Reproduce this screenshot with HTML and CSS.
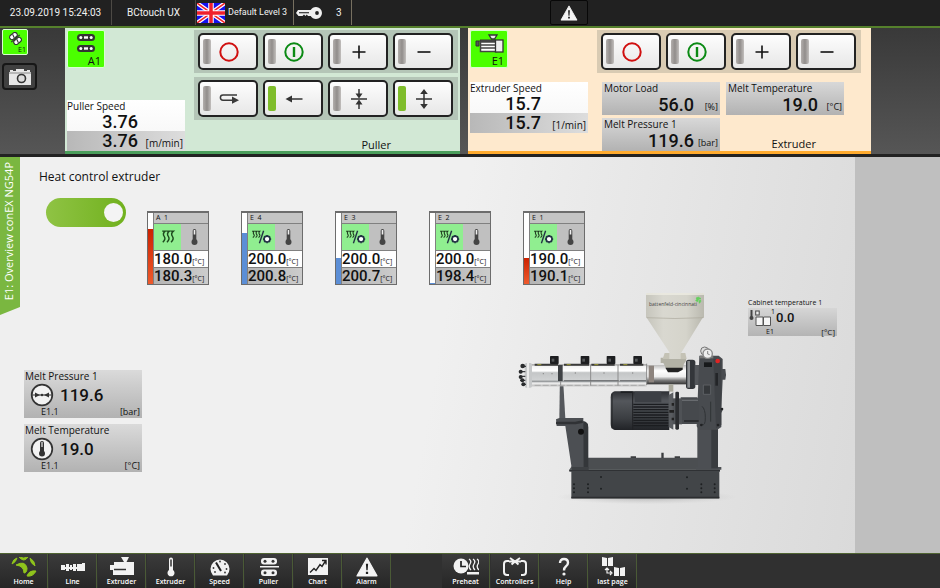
FILE: index.html
```html
<!DOCTYPE html>
<html lang="en">
<head>
<meta charset="utf-8">
<title>BCtouch UX</title>
<link rel="stylesheet" href="styles.css">
</head>
<body>
<svg class="defs" aria-hidden="true">
  <defs>
    <symbol id="i-off" viewBox="0 0 20 20"><circle cx="10" cy="10" r="8.7" fill="none" stroke="#d01010" stroke-width="2"/></symbol>
    <symbol id="i-on" viewBox="0 0 20 20"><circle cx="10" cy="10" r="8.7" fill="none" stroke="#0b8a14" stroke-width="2"/><path d="M10 5v10" stroke="#0b8a14" stroke-width="2.4"/></symbol>
    <symbol id="i-plus" viewBox="0 0 20 20"><path d="M3.5 10h13M10 3.5v13" stroke="#111" stroke-width="1.6"/></symbol>
    <symbol id="i-minus" viewBox="0 0 20 20"><path d="M3.500 10h13" stroke="#111" stroke-width="1.6"/></symbol>
    <symbol id="i-loop" viewBox="0 0 20 20"><path d="M18 6H4a2.600 2.600 0 0 0 0 5.200h10" fill="none" stroke="#3a3a3a" stroke-width="1.5"/><path d="M13 7.500l7 3.700-7 3.500z" fill="#3a3a3a"/></symbol>
    <symbol id="i-left" viewBox="0 0 20 20"><path d="M5 10h13.500" stroke="#333" stroke-width="1.500"/><path d="M1.500 10l6.500-3.500v7z" fill="#333"/></symbol>
    <symbol id="i-close" viewBox="0 0 20 20"><path d="M2 10h16M10 0v6M10 14v6" stroke="#333" stroke-width="1.500"/><path d="M6.500 4.500h7L10 9.500zM6.500 15.500h7L10 10.500z" fill="#333"/></symbol>
    <symbol id="i-open" viewBox="0 0 20 20"><path d="M2 10h16M10 3v14" stroke="#333" stroke-width="1.500"/><path d="M6.200 5h7.600L10 0zM6.200 15h7.600L10 20z" fill="#333"/></symbol>
    <symbol id="i-heat" viewBox="-2 -2 17 17"><path d="M2 1.500h2.500q-2.500 2.200-.8 4.500t-1.200 5M5.500 1.500H8q-2.500 2.200-.8 4.500T6 11M9 1.500h2.500q-2.500 2.200-.8 4.500t-1.200 5" fill="none" stroke="#1d4a1d" stroke-width="1.200"/></symbol>
    <symbol id="i-heatcool" viewBox="0 0 20 14"><path d="M1 1.500h2q-1.500 1.500-.3 3t-1 3M3.700 1.500h2q-1.500 1.500-.3 3t-1 3M6.400 1.500h2q-1.500 1.500-.3 3t-1 3" fill="none" stroke="#1d3a1d" stroke-width="1"/><path d="M12 1L8 13" stroke="#234" stroke-width="1.300"/><circle cx="15.300" cy="9" r="2.800" fill="#fff" stroke="#234" stroke-width="1.500"/><path d="M15.300 5v1M15.300 12v1M11.500 9h1M18.200 9h1M12.600 6.300l.7.700M17.300 11l.7.700M18 6.300l-.7.700M13.300 11l-.7.700" stroke="#234" stroke-width="1.500"/></symbol>
    <symbol id="i-thermo" viewBox="0 0 8 18"><rect x="2.200" y="1" width="3.600" height="12" rx="1.800" fill="#444"/><rect x="3.200" y="2" width="1.600" height="4.500" fill="#eee"/><circle cx="4" cy="14" r="3" fill="#444"/></symbol>
    <symbol id="i-puller" viewBox="0 0 18 18"><g fill="#333"><rect x="0" y="0" width="18" height="7" rx="3.500"/><rect x="0" y="11" width="18" height="7" rx="3.500"/></g><g fill="#fff"><circle cx="3.800" cy="3.500" r="1.500"/><circle cx="14.200" cy="3.500" r="1.500"/><rect x="7" y="2.300" width="4" height="2.400"/><circle cx="3.800" cy="14.500" r="1.500"/><circle cx="14.200" cy="14.500" r="1.500"/><rect x="7" y="13.300" width="4" height="2.400"/></g></symbol>
    <symbol id="i-warn" viewBox="0 0 20 18"><path d="M10 1L19 17H1z" fill="#f4f4f4" stroke="#f4f4f4" stroke-linejoin="round"/><path d="M9 6h2l-.4 6h-1.200zM9 13.200h2v2H9z" fill="#222"/></symbol>
  </defs>
</svg>

<header class="topbar">
  <time class="cell cell-time">23.09.2019 15:24:03</time>
  <span class="cell cell-app">BCtouch UX</span>
  <span class="cell cell-user">
    <svg class="flag" viewBox="0 0 28 20" aria-label="English"><path fill="#1410f0" d="M0 0h28v20H0z"/><path d="M0 0l28 20M28 0L0 20" stroke="#fff" stroke-width="4"/><path d="M0 0l28 20M28 0L0 20" stroke="#f0202c" stroke-width="1.500"/><path d="M14 0v20M0 10h28" stroke="#fff" stroke-width="5.500"/><path d="M14 0v20M0 10h28" stroke="#f0202c" stroke-width="3.500"/></svg>
    <span>Default Level 3</span>
  </span>
  <span class="cell cell-key">
    <svg class="key" viewBox="0 0 26 12"><path d="M20 0a6 6 0 0 1 0 12q-3.500 0-5.300-3H12l-1.200-1.500L9.500 9 8 7.500 6.500 9H2.500L0 6l2-3h12.700Q16.500 0 20 0z" fill="#f0f0f0"/><circle cx="21" cy="6" r="1.900" fill="#222"/><path d="M3 5.700h10" stroke="#333" stroke-width="1.200"/></svg>
    <span>3</span>
  </span>
  <button class="alarm" aria-label="Alarms"><svg viewBox="0 0 20 18"><use href="#i-warn"/></svg></button>
</header>

<section class="deck">
  <div class="tools">
    <button class="badge badge-small" aria-label="Extruder E1">
      <svg viewBox="0 0 14 14"><g transform="rotate(-40 7 7)" fill="#fff" stroke="#333" stroke-width="1.200"><rect x="2.500" y="1" width="9" height="5" rx="2.300"/><rect x="2.500" y="8" width="9" height="5" rx="2.300"/><path d="M1 7h12M7.500 1.500l-1 4M7.500 8.500l-1 4"/></g></svg>
      <span>E1</span>
    </button>
    <button class="camera" aria-label="Screenshot"><svg viewBox="0 0 22 16"><path d="M0 3h1V1h3v1h3V0h8v2h3V1h3v2h1v13H0z" fill="#e6e6e6"/><path d="M0 4h22" stroke="#888" stroke-width="1"/><circle cx="12.500" cy="9.500" r="4" fill="#ddd" stroke="#333" stroke-width="1.600"/></svg></button>
  </div>

  <section class="panel puller">
    <div class="side">
      <button class="badge" aria-label="Puller A1"><svg class="b-puller" viewBox="0 0 18 18"><use href="#i-puller"/></svg><span>A1</span></button>
      <div class="dual"><h3>Puller Speed</h3><p class="set">3.76</p><p class="act">3.76<span>[m/min]</span></p></div>
    </div>
    <div class="controls">
      <div class="keys">
        <button aria-label="Stop"><i></i><svg><use href="#i-off"/></svg></button>
        <button aria-label="Start"><i></i><svg><use href="#i-on"/></svg></button>
        <button aria-label="Faster"><i></i><svg><use href="#i-plus"/></svg></button>
        <button aria-label="Slower"><i></i><svg><use href="#i-minus"/></svg></button>
      </div>
      <div class="keys">
        <button aria-label="Reverse"><i></i><svg><use href="#i-loop"/></svg></button>
        <button aria-label="Forward"><i class="lit"></i><svg><use href="#i-left"/></svg></button>
        <button aria-label="Close"><i></i><svg><use href="#i-close"/></svg></button>
        <button aria-label="Open"><i class="lit"></i><svg><use href="#i-open"/></svg></button>
      </div>
      <h2>Puller</h2>
    </div>
  </section>

  <section class="panel extruder">
    <div class="side">
      <button class="badge" aria-label="Extruder E1"><svg class="b-ext" viewBox="0 0 29 20"><path d="M14 1h8l-2.500 4h-3z" fill="#eee" stroke="#333" stroke-width="1.300"/><path d="M1 7h3v5H1zM5 6h16v2H5z" fill="#555" stroke="#333"/><rect x="5.500" y="8" width="16" height="9.500" fill="#fff" stroke="#444" stroke-width="1.500"/><path d="M6 11h15M6 14h15" stroke="#444" stroke-width="1.500"/><rect x="20.500" y="6" width="7.500" height="12" fill="#eee" stroke="#333" stroke-width="1.300"/></svg><span>E1</span></button>
      <div class="dual"><h3>Extruder Speed</h3><p class="set">15.7</p><p class="act">15.7<span>[1/min]</span></p></div>
    </div>
    <div class="controls">
      <div class="keys">
        <button aria-label="Stop"><i></i><svg><use href="#i-off"/></svg></button>
        <button aria-label="Start"><i></i><svg><use href="#i-on"/></svg></button>
        <button aria-label="Faster"><i></i><svg><use href="#i-plus"/></svg></button>
        <button aria-label="Slower"><i></i><svg><use href="#i-minus"/></svg></button>
      </div>
      <div class="readings">
        <div class="reading"><h3>Motor Load</h3><p>56.0<span>[%]</span></p></div>
        <div class="reading"><h3>Melt Temperature</h3><p>19.0<span>[°C]</span></p></div>
        <div class="reading"><h3>Melt Pressure 1</h3><p>119.6<span>[bar]</span></p></div>
        <h2>Extruder</h2>
      </div>
    </div>
  </section>
</section>

<main>
  <div class="tab"><span>E1: Overview conEX NG54P</span></div>
  <div class="screen">
    <h1><label for="heat">Heat control extruder</label></h1>
    <div class="heating">
      <input class="switch" id="heat" type="checkbox" role="switch" checked>
      <div class="zones">
        <article class="zone"><div class="bar"><b class="hot" style="height:77%"></b></div><div class="info"><h4>A&nbsp; 1</h4><div class="modes"><svg class="heat"><use href="#i-heat"/></svg><svg><use href="#i-thermo"/></svg></div><p>180.0<span>[°C]</span></p><p class="act">180.3<span>[°C]</span></p></div></article>
        <article class="zone"><div class="bar"><b class="cold" style="height:72%"></b></div><div class="info"><h4>E&nbsp; 4</h4><div class="modes"><svg class="heat"><use href="#i-heatcool"/></svg><svg><use href="#i-thermo"/></svg></div><p>200.0<span>[°C]</span></p><p class="act">200.8<span>[°C]</span></p></div></article>
        <article class="zone"><div class="bar"><b class="cold" style="height:36%"></b></div><div class="info"><h4>E&nbsp; 3</h4><div class="modes"><svg class="heat"><use href="#i-heatcool"/></svg><svg><use href="#i-thermo"/></svg></div><p>200.0<span>[°C]</span></p><p class="act">200.7<span>[°C]</span></p></div></article>
        <article class="zone"><div class="bar"><b class="cold" style="height:2%"></b></div><div class="info"><h4>E&nbsp; 2</h4><div class="modes"><svg class="heat"><use href="#i-heatcool"/></svg><svg><use href="#i-thermo"/></svg></div><p>200.0<span>[°C]</span></p><p class="act">198.4<span>[°C]</span></p></div></article>
        <article class="zone"><div class="bar"><b class="hot" style="height:36%"></b></div><div class="info"><h4>E&nbsp; 1</h4><div class="modes"><svg class="heat"><use href="#i-heatcool"/></svg><svg><use href="#i-thermo"/></svg></div><p>190.0<span>[°C]</span></p><p class="act">190.1<span>[°C]</span></p></div></article>
      </div>
    </div>

    <div class="plant">
      <div class="sensors">
        <div class="sensor"><h3>Melt Pressure 1</h3><div class="line"><svg viewBox="0 0 24 24"><circle cx="12" cy="12" r="10.300" fill="#f2f2f2" stroke="#333" stroke-width="1.700"/><path d="M2 12h20" stroke="#333" stroke-width="1"/><path d="M5 9.500l5 2.500-5 2.500zM19 9.500L14 12l5 2.500z" fill="#333"/><circle cx="12" cy="12" r="1.300" fill="#333"/></svg><strong>119.6</strong></div><div class="foot"><span>E1.1</span><span>[bar]</span></div></div>
        <div class="sensor"><h3>Melt Temperature</h3><div class="line"><svg viewBox="0 0 24 24"><circle cx="12" cy="12" r="10.300" fill="#f2f2f2" stroke="#333" stroke-width="1.700"/><rect x="10" y="4" width="4" height="12" rx="2" fill="#333"/><rect x="11.200" y="5" width="1.600" height="5" fill="#bbb"/><circle cx="12" cy="16.500" r="3" fill="#333"/></svg><strong>19.0</strong></div><div class="foot"><span>E1.1</span><span>[°C]</span></div></div>
      </div>

      <svg class="machine" viewBox="0 0 720 660" role="img" aria-label="Extruder machine">
        <defs>
          <linearGradient id="steel" x1="0" y1="0" x2="0" y2="1"><stop offset="0" stop-color="#8e8e8e"/><stop offset=".1" stop-color="#f4f4f4"/><stop offset=".3" stop-color="#fff"/><stop offset=".38" stop-color="#c4c6c7"/><stop offset=".7" stop-color="#cfd1d2"/><stop offset=".78" stop-color="#9a9d9f"/><stop offset=".85" stop-color="#f2f2f2"/><stop offset="1" stop-color="#bbb"/></linearGradient>
          <linearGradient id="chrome" x1="0" y1="0" x2="0" y2="1"><stop offset="0" stop-color="#bbb"/><stop offset=".3" stop-color="#fff"/><stop offset=".6" stop-color="#eee"/><stop offset=".8" stop-color="#777"/><stop offset="1" stop-color="#333"/></linearGradient>
          <linearGradient id="cream" x1="0" y1="0" x2="1" y2="0"><stop offset="0" stop-color="#c6c5bc"/><stop offset=".3" stop-color="#d9d8d0"/><stop offset=".7" stop-color="#d5d4cb"/><stop offset="1" stop-color="#bab9af"/></linearGradient>
          <linearGradient id="motor" x1="0" y1="0" x2="0" y2="1"><stop offset="0" stop-color="#2d2f33"/><stop offset=".25" stop-color="#54575c"/><stop offset=".7" stop-color="#3b3e42"/><stop offset="1" stop-color="#212327"/></linearGradient>
          <radialGradient id="shade"><stop offset="0" stop-color="#999" stop-opacity=".7"/><stop offset="1" stop-color="#bbb" stop-opacity="0"/></radialGradient>
        </defs>
        <ellipse cx="440" cy="636" rx="270" ry="22" fill="url(#shade)"/>
        <!-- base frame -->
        <path d="M232 518h390l38 36H208z" fill="#4b4e51"/>
        <path d="M208 554h452v6h-2v80H214v-80h-6z" fill="#424548"/>
        <path d="M208 556h452" stroke="#2f3134" stroke-width="4"/>
        <path d="M214 638h444" stroke="#2c2e30" stroke-width="5"/>
        <g fill="#1e2022"><circle cx="222" cy="598" r="3"/><circle cx="222" cy="610" r="3"/><circle cx="222" cy="622" r="3"/><circle cx="264" cy="598" r="3"/><circle cx="264" cy="610" r="3"/><circle cx="264" cy="622" r="3"/><circle cx="303" cy="576" r="3"/><circle cx="303" cy="611" r="3"/><circle cx="561" cy="577" r="3"/><circle cx="561" cy="611" r="3"/><circle cx="604" cy="598" r="3"/><circle cx="604" cy="610" r="3"/><circle cx="604" cy="622" r="3"/><circle cx="644" cy="598" r="3"/><circle cx="644" cy="610" r="3"/><circle cx="644" cy="622" r="3"/></g>
        <path d="M392 514h16v5h-16zM484 503h7v16h-7zM524 514h16v5h-16z" fill="#3b3d3f"/>
        <!-- front support -->
        <path d="M180 262l-2 138h18l-8-138z" fill="#55585c"/>
        <path d="M172 262h16v30h-16z" fill="#4a4d50"/>
        <path d="M168 403l10-4h72v10l14 8v130l-12 8h-36l-20-132h-26z" fill="#4c4f53"/>
        <path d="M168 414h58l22-4" stroke="#303235" stroke-width="8" fill="none"/>
        <path d="M250 408q15 2 15 20v120h-14z" fill="#34373a"/>
        <circle cx="243" cy="440" r="9" fill="#111"/>
        <path d="M216 546h50v10h-50z" fill="#3d4043"/>
        <!-- barrel -->
        <rect x="90" y="238" width="350" height="66" fill="url(#steel)"/>
        <path d="M104 239h70M192 239h75M274 239h70M360 239h70" stroke="#3a3a3a" stroke-width="6"/>
        <path d="M112 239h12M200 239h12M283 239h12M370 239h12" stroke="#9c9a33" stroke-width="3"/>
        <path d="M182 240v62M272 240v62M354 240v62" stroke="#8c8c8c" stroke-width="3"/>
        <path d="M174 240h14v48h-14z" fill="#3f4245"/>
        <path d="M192 287h164M360 287h80" stroke="#6a6c6f" stroke-width="3"/>
        <path d="M104 301h330" stroke="#9a9a9a" stroke-width="2" stroke-dasharray="18 6"/>
        <g fill="#888"><circle cx="130" cy="266" r="2"/><circle cx="156" cy="266" r="2"/><circle cx="226" cy="264" r="2"/><circle cx="312" cy="264" r="2"/><circle cx="398" cy="264" r="2"/></g>
        <g fill="#1d1e20"><rect x="150" y="213" width="26" height="24" rx="2"/><rect x="242" y="213" width="26" height="24" rx="2"/><rect x="320" y="213" width="26" height="24" rx="2"/><rect x="400" y="213" width="26" height="24" rx="2"/></g>
        <g fill="#55585a"><rect x="155" y="221" width="8" height="9"/><rect x="247" y="221" width="8" height="9"/><rect x="325" y="221" width="8" height="9"/><rect x="405" y="221" width="8" height="9"/></g>
        <rect x="74" y="234" width="22" height="74" rx="5" fill="#c6c8c9"/><path d="M84 234v74" stroke="#f2f2f2" stroke-width="5"/>
        <path d="M66 244h12M60 260h16M60 274h16M60 286h16M66 298h12" stroke="#3c3e40" stroke-width="4"/>
        <g fill="#292b2d"><circle cx="68" cy="243" r="7"/><circle cx="62" cy="260" r="6"/><circle cx="62" cy="276" r="6"/><circle cx="67" cy="286" r="6"/><circle cx="70" cy="298" r="6"/></g>
        <rect x="440" y="240" width="122" height="58" fill="url(#chrome)"/>
        <path d="M446 242h16v50h-16z" fill="#8d847e"/>
        <path d="M440 236v64" stroke="#888" stroke-width="3"/>
        <!-- hopper -->
        <path d="M482 218h76v10l-6 8-4 14h-50l-8-16h-8z" fill="#b2b1a5"/>
        <path d="M496 248h52v6l-14 8h-30z" fill="#222"/>
        <path d="M494 204h62l4 18h-72z" fill="#c4c2b5"/>
        <path d="M440 98h168l-66 108v16h-34v-20z" fill="url(#cream)"/>
        <rect x="438" y="24" width="174" height="75" rx="3" fill="url(#cream)"/>
        <path d="M438 27h174" stroke="#efeee4" stroke-width="4"/>
        <path d="M440 98q84 5 170 0" stroke="#aaa89b" stroke-width="2" fill="none"/>
        <text class="brand" x="447" y="63">battenfeld-cincinnati</text>
        <path d="M587 47q10-14 16-6-8-1-10 9zM592 44l-4-5 8-3zM598 55q-4-9 4-10 2 6-4 10z" fill="#62d05c" stroke="#62d05c" stroke-width="2"/>
        <!-- gearbox -->
        <path d="M558 232q0-8 8-8h12q8 0 8 8v72q0 8-8 8h-12q-8 0-8-8z" fill="#33363a"/>
        <path d="M562 228h8v80h-8z" fill="#8b8e91"/>
        <path d="M584 240h22v60h-22z" fill="#54575b"/>
        <path d="M592 420h62v126h10v8h-76v-8h4z" fill="#4c4f53"/><path d="M634 430h20v120h-20z" fill="#393c3f"/>
        <path d="M598 212h58l12 10v30h8q4 18 0 32h-8l-4 86 4 6-4 8v42l-12 8h-54l-8-10z" fill="#484b4f"/>
        <path d="M640 222l24 2v196l-16 10z" fill="#3e4145"/>
        <path d="M610 300h22v28h-22z" fill="#35383b" stroke="#5c5f63" stroke-width="3"/>
        <path d="M612 232h24v14h-24z" fill="#17191b"/><path d="M646 264h8v38h-8z" fill="#232528"/><path d="M606 364q10 8 10 34t-10 20M632 350v60" fill="none" stroke="#303336" stroke-width="3"/>
        <g fill="#202224"><circle cx="604" cy="420" r="4"/><circle cx="654" cy="420" r="4"/><circle cx="666" cy="372" r="4"/></g>
        <circle cx="653" cy="228" r="7" fill="#e02424"/><path d="M600 212h40v8h-40z" fill="#777"/>
        <circle cx="614" cy="198" r="12" fill="#ddd" stroke="#777" stroke-width="3"/><circle cx="623" cy="206" r="14" fill="#eee" stroke="#888" stroke-width="4"/><path d="M623 198v9l6 2" stroke="#555" fill="none" stroke-width="2"/>
        <!-- motor -->
        <path d="M506 298h14v22h-14z" fill="#aaa99c"/>
        <path d="M344 319h164v116H344q-12-3-12-18V337q0-15 12-18z" fill="url(#motor)"/>
        <path d="M336 326v104M398 319v116" stroke="#202225" stroke-width="3"/>
        <path d="M400 358h106M400 366h106M400 374h106M400 382h106M400 390h106M400 398h106M400 406h106M400 414h106M400 422h106" stroke="#1b1d20" stroke-width="4"/>
        <path d="M404 320h80v32h-80z" fill="#3c3f44"/><path d="M362 319h34v5h-34z" fill="#1e2023"/>
        <path d="M506 330l14-8v112l-14-8z" fill="#595c60"/>
        <path d="M542 337h50l4 8v72H542z" fill="#46494d"/><path d="M546 346h48" stroke="#686b6f" stroke-width="4"/><path d="M552 408h44" stroke="#26282b" stroke-width="5"/>
        <rect x="518" y="340" width="28" height="78" fill="#4f5256"/>
        <rect x="526" y="320" width="11" height="114" rx="4" fill="#2b2d30"/>
        <path d="M508 375h14v8h-14zM515 354h7v8h-7zM515 398h7v8h-7z" fill="#222"/>
      </svg>

      <div class="cabinet"><h3>Cabinet temperature 1</h3><div class="box"><svg viewBox="0 0 22 18"><rect x="1.500" y="1" width="2" height="8" fill="#444"/><circle cx="2.500" cy="9" r="2" fill="#444"/><rect x="6.700" y="2" width="3.500" height="4" fill="#eee" stroke="#444"/><path d="M7 8h7v8.500H7zM14.500 8h7v8.500h-7z" fill="#f6f6f6" stroke="#555"/></svg><sup>1</sup><strong>0.0</strong><span class="idx">E1</span><span class="unit">[°C]</span></div></div>
    </div>
  </div>
  <aside></aside>
</main>

<nav>
  <button><svg viewBox="0 0 26 20"><path d="M1 7Q2 2 6 1 5 5 1 7zM8 0q5 2 9 0-4 6-9 0zM19 1q5 3 5 8-5-3-5-8zM5 8q9-5 11 3 0 5-3 5 0-7-8-8zM16 19q2-6 9-5-3 6-9 5z" fill="#8fc31c" stroke="#8fc31c"/></svg>Home</button>
  <button><svg viewBox="0 0 26 20"><g fill="#f2f2f2"><path d="M1 8h4v5H1zM6 7h3v7H6zM10 8h2v5h-2zM13 7h3v7h-3zM17 7h5V6h3v8h-8z"/><path d="M1 10h24v2H1z"/></g></svg>Line</button>
  <button><svg viewBox="0 0 26 20"><path d="M12 0h8l-2.500 5H25v13H4v-5H1V8h4V5h10z" fill="#f2f2f2"/><path d="M5 12.500h12" stroke="#333" stroke-width="1.500"/></svg>Extruder</button>
  <button><svg viewBox="0 0 26 20"><path d="M11 2.500a2 2 0 0 1 4 0V13a3.500 3.500 0 1 1-4 0z" fill="#f2f2f2"/><path d="M13 2.500v7" stroke="#333" stroke-width="1.500"/></svg>Extruder</button>
  <button><svg viewBox="0 0 26 20"><path d="M6 18.500a9.500 9.500 0 1 1 14 0z" fill="#f2f2f2"/><path d="M9 5.500l5 8.500" stroke="#222" stroke-width="2"/><g fill="#333"><circle cx="6.500" cy="11" r=".9"/><circle cx="13" cy="4.500" r=".9"/><circle cx="18" cy="7" r=".9"/><circle cx="19.500" cy="12" r=".9"/><circle cx="8" cy="15" r=".9"/><circle cx="18" cy="15.500" r=".9"/></g></svg>Speed</button>
  <button><svg viewBox="0 0 26 20"><g fill="#f2f2f2"><rect x="5" y="1" width="16" height="6.500" rx="3"/><rect x="5" y="12.500" width="16" height="6.500" rx="3"/><path d="M4 9h19v1.500H4z"/></g><g fill="#333"><circle cx="9" cy="4.200" r="1.500"/><circle cx="17" cy="4.200" r="1.500"/><circle cx="9" cy="15.700" r="1.500"/><circle cx="17" cy="15.700" r="1.500"/></g></svg>Puller</button>
  <button><svg viewBox="0 0 26 20"><path d="M3 1h20v17H3z" fill="#f2f2f2"/><path d="M5 15.500l4-4 2 2 4-6 2 2L20.500 4M17 3.500h4V7.500" fill="none" stroke="#222" stroke-width="1.400"/></svg>Chart</button>
  <button><svg viewBox="0 0 20 18"><use href="#i-warn"/></svg>Alarm</button>
  <button class="second"><svg viewBox="0 0 26 20"><circle cx="8" cy="9" r="7.500" fill="#f2f2f2"/><path d="M8 4v5.500h5" fill="none" stroke="#222" stroke-width="1.700"/><path d="M14 15h12v2.500H14z" fill="#f2f2f2"/><path d="M16 2q3 2 1 5t1 6M20 2q3 2 1 5t1 6M24 2q3 2 1 5t1 6" fill="none" stroke="#f2f2f2" stroke-width="1.300"/></svg>Preheat</button>
  <button><svg viewBox="0 0 26 20"><path d="M7 4H5Q2 4 2 7v8q0 3 3 3h2M19 4h2q3 0 3 3v8q0 3-3 3h-2M8 1l5 3.500L18 1M9.500 7.500L13 4.500l3.500 3M7 4.500h12" fill="none" stroke="#f2f2f2" stroke-width="2"/></svg>Controllers</button>
  <button><svg viewBox="0 0 26 20"><path d="M9 6q0-4 4-4t4 3.800q0 2.200-2.200 3.700Q13 11 13 13.500" fill="none" stroke="#f2f2f2" stroke-width="2.400"/><circle cx="13" cy="17" r="1.600" fill="#f2f2f2"/></svg>Help</button>
  <button><svg viewBox="0 0 26 20"><path d="M2 0l5 1v8H2zM8 1l5-1v9H8zM14 10l5 1v8h-5zM20 11l5-1v9h-5z" fill="#f2f2f2"/><path d="M7 11.500V16h4M5 13l2-2 2 2M10 14l2 2-2 2" fill="none" stroke="#f2f2f2" stroke-width="1.200"/></svg>last page</button>
</nav>
</body>
</html>
```
FILE: styles.css
```css
* { box-sizing: border-box; }

body {
  margin: 0;
  min-height: 100vh;
  display: flex;
  flex-direction: column;
  background: #efefef;
  color: #111;
  font-family: "Open Sans", "Noto Sans", sans-serif;
  font-size: 10px;
  line-height: 13px;
}

h1, h2, h3, h4, p { margin: 0; font-weight: 400; font-size: inherit; }
button { margin: 0; padding: 0; border: 0; font: inherit; color: inherit; }
svg { display: block; }
.defs { position: absolute; width: 0; height: 0; }

/* Top bar */
.topbar {
  display: flex;
  height: 28px;
  padding-bottom: 1px;
  background: #212121;
  border-bottom: 2px solid #55802c;
  color: #f2f2f2;
  font-family: Roboto, sans-serif;
  font-size: 10px;
}
.cell {
  display: flex;
  align-items: center;
  justify-content: center;
  border-right: 1px solid #4d4a45;
}
.cell-time { width: 112px; }
.cell-app { width: 84px; }
.cell-user { width: 98px; justify-content: flex-start; gap: 3px; padding-left: 1px; font-size: 9px; border-color: #777060; }
.cell-key { width: 58px; justify-content: flex-start; padding-left: 2px; gap: 14px; border-color: #777060; }
.flag { width: 28px; height: 20px; }
.key { width: 26px; height: 12px; }
.alarm {
  margin-left: 198px;
  width: 38px;
  height: 25px;
  display: grid;
  place-items: center;
  background: #222;
  border: 1px solid #080808;
  border-radius: 2px;
}
.alarm svg { width: 18px; height: 16px; }

/* Machine deck */
.deck {
  display: flex;
  height: 129px;
  background: linear-gradient(#393939, #565656);
  border-bottom: 3px solid #222;
}
.deck::after { content: ""; width: 69px; }
.tools { width: 65px; padding: 1px 2px; }
.badge {
  display: flex;
  flex-direction: column;
  align-items: center;
  justify-content: space-between;
  width: 38px;
  height: 38px;
  padding: 3px 3px 0;
  background: #4bff00;
  border: 1px solid #d8ffd0;
  border-radius: 2px;
}
.badge span { align-self: flex-end; font-size: 11px; }
.badge-small { width: 26px; height: 26px; padding: 2px 1px 0; }
.badge-small svg { width: 13px; height: 13px; }
.badge-small span { font-size: 7px; line-height: 8px; }
.b-puller { width: 18px; height: 18px; }
.b-ext { width: 29px; height: 20px; }
.camera {
  display: grid;
  place-items: center;
  width: 35px;
  height: 27px;
  margin-top: 8px;
  background: #404040;
  border: 2px solid #171717;
  border-radius: 4px;
}
.camera svg { width: 22px; height: 16px; }

.panel { display: flex; justify-content: space-between; padding: 2px 2px 0; }
.puller { flex: 395; background: #d2e8d5; border-bottom: 3px solid #4a9e5b; }
.extruder { flex: 403; margin-left: 8px; background: #fee9cd; border-bottom: 3px solid #ffab2e; }
.extruder .controls { margin-right: 8px; }
.side { display: flex; flex-direction: column; width: 118px; }
.puller .side { justify-content: space-between; }
.extruder .side { gap: 14px; }

.dual { background: linear-gradient(#fff, #f4f4f4); }
.dual p {
  display: grid;
  grid-template-columns: 71px 1fr;
  font: 500 18px/18px Roboto, sans-serif;
  text-align: right;
}
.dual .act { height: 20px; background: linear-gradient(90deg, #b8b8b8, #ddd); line-height: 20px; }
.dual .act span { padding-right: 2px; font: 10px/24px "Open Sans", sans-serif; }

.controls { display: flex; flex-direction: column; width: 264px; }
.keys {
  display: flex;
  gap: 5px;
  height: 43px;
  margin-bottom: 4px;
  padding: 3px 4px;
  background: #b4c5b7;
}
.extruder .keys { background: #d9cbb3; margin-bottom: 9px; }
.keys button {
  display: flex;
  align-items: center;
  gap: 8px;
  width: 60px;
  height: 37px;
  padding-left: 3px;
  background: linear-gradient(#fdfdfd, #e7e7e7);
  border: 2px solid #222;
  border-radius: 5px;
}
.keys i { width: 8px; height: 25px; border-radius: 2px; background: linear-gradient(90deg, #b2aeac, #918d8b, #c2bfbd); }
.keys i.lit { background: #7fbd2b; }
.keys svg { width: 20px; height: 20px; }
.panel h2 { font-size: 11px; line-height: 14px; text-align: right; }
.puller h2 { margin-top: 14px; padding-right: 67px; }

.readings { display: grid; grid-template-columns: 118px 118px; gap: 3px 6px; padding-left: 5px; }
.reading { height: 33px; background: linear-gradient(#d8d8d8, #b2b2b2); }
.reading h3 { padding-left: 2px; }
.reading p {
  display: grid;
  grid-template-columns: 1fr 26px;
  font: 500 18px/20px Roboto, sans-serif;
  text-align: right;
}
.reading p span { padding-right: 2px; font: 9px/24px "Open Sans", sans-serif; }
.readings h2 { align-self: end; padding-right: 28px; }

/* Overview screen */
main { display: flex; flex: 1; }
.tab {
  align-self: flex-start;
  width: 20px;
  height: 158px;
  padding-top: 5px;
  background: #7ab740;
  clip-path: polygon(0 0, 100% 0, 100% 95%, 0 100%);
  color: #fff;
  font-size: 11px;
}
.tab span { writing-mode: vertical-rl; transform: rotate(180deg); line-height: 18px; white-space: nowrap; }
.screen {
  flex: 1;
  padding: 10px 18px 0 4px;
  background: linear-gradient(100deg, #f0f0f0 50%, #e9e9e9 65%, #dadada 100%);
}
aside { width: 85px; background: #bfbfbf; }
h1 { padding-left: 15px; font-size: 12px; line-height: 20px; }
.heating { display: flex; gap: 21px; padding: 11px 0 0 22px; }
.switch {
  appearance: none;
  display: flex;
  justify-content: flex-end;
  width: 80px;
  height: 29px;
  margin: 0;
  padding: 5px 3px;
  border-radius: 15px;
  background: linear-gradient(90deg, #8fc344, #71b11e);
}
.switch::before { content: ""; width: 19px; height: 19px; border-radius: 50%; background: #f4f4f4; }
.switch:not(:checked) { justify-content: flex-start; }
.zones { display: flex; gap: 32px; padding-top: 13px; }
.zone { display: flex; width: 62px; height: 74px; background: #808080; border: 1px solid #6c6c6c; border-top-width: 2px; }
.bar { display: flex; align-items: flex-end; width: 5px; background: #fff; margin-right: 1px; }
.bar b { width: 100%; }
.hot { background: linear-gradient(#cc2200, #ee5a2c); }
.cold { background: #5b8ed6; }
.info { display: flex; flex-direction: column; gap: 1px; flex: 1; }
.info h4 { height: 10px; padding-left: 2px; background: #c4c4c4; font-size: 7px; line-height: 10px; }
.modes { display: grid; grid-template-columns: 1fr 1fr; height: 26px; background: #c0c0c0; }
.modes svg { width: 100%; height: 26px; padding: 4px; }
.modes .heat { padding: 3px; background: #90ee90; }
.info p {
  display: flex;
  align-items: flex-end;
  height: 16px;
  background: #fff;
  font: 500 15px/16px Roboto, sans-serif;
}
.info p span { font: 7px/10px "Open Sans", sans-serif; }
.info .act { background: linear-gradient(90deg, #b4b4b4, #ccc); }

.plant { display: flex; gap: 8px; }
.sensors { display: flex; flex-direction: column; gap: 6px; width: 118px; padding-top: 85px; }
.sensor { height: 48px; padding: 0 2px 0 1px; background: linear-gradient(#dadada, #b2b2b2); }
.line { display: flex; align-items: center; gap: 6px; height: 23px; padding-left: 5px; }
.line svg { width: 24px; height: 24px; }
.line strong { font: 500 17px/20px Roboto, sans-serif; }
.foot { display: flex; justify-content: space-between; padding-left: 16px; font-size: 9px; line-height: 12px; }
.machine { width: 240px; height: 220px; margin-left: auto; }
.brand { font-family: "Open Sans", sans-serif; font-size: 15px; fill: #444; }
.cabinet { width: 89px; padding-top: 13px; }
.cabinet h3 { font-size: 7px; line-height: 10px; white-space: nowrap; }
.box {
  display: grid;
  grid-template-columns: 22px 5px 1fr auto;
  align-items: center;
  height: 28px;
  padding: 0 2px 0 1px;
  background: linear-gradient(#d6d6d6, #b4b4b4);
}
.box svg { width: 22px; height: 18px; }
.box sup { align-self: start; font-size: 7px; line-height: 8px; }
.box strong { grid-column: span 2; font: 500 13px/18px Roboto, sans-serif; }
.box .idx { grid-column: 1 / 4; padding-left: 17px; font-size: 7px; line-height: 8px; }
.box .unit { font-size: 8px; line-height: 8px; }

/* Bottom navigation */
nav { display: flex; gap: 1px; height: 35px; background: #303030; border-top: 1px solid #506432; }
nav button {
  display: flex;
  flex-direction: column;
  align-items: center;
  width: 48px;
  padding-top: 3px;
  background: linear-gradient(#3b3b3b, #262626);
  border-right: 1px solid #4a5a36;
  color: #fff;
  font-size: 7px;
  font-weight: 600;
  line-height: 9px;
  white-space: nowrap;
}
nav svg { width: 26px; height: 20px; }
nav .second { margin-left: 50px; }
```
